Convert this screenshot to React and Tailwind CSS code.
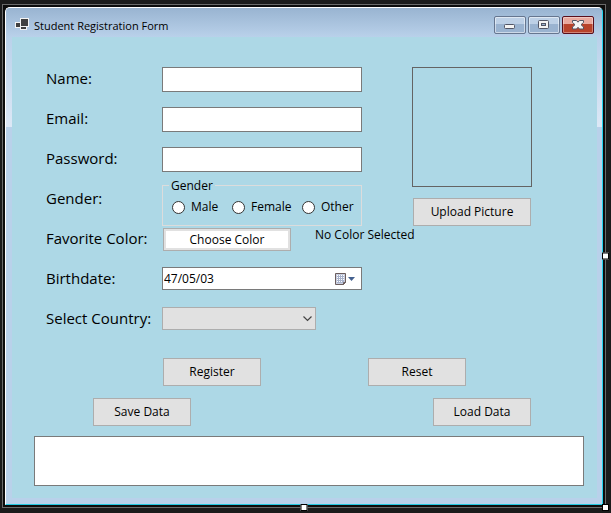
import React from "react";

const buttonClass =
  "h-7 shrink-0 border border-[#adadad] bg-[#e1e1e1] text-center text-[12px] leading-4 text-black";
const inputClass =
  "block h-[25px] w-full border border-[#7a7a7a] bg-white px-1 text-[12px] leading-4 outline-none";
const rowLabelClass = "w-[116px] shrink-0 pt-[7px] text-[15px] leading-6 whitespace-nowrap";

function Row({ label, htmlFor, children }) {
  return (
    <div className="flex h-10">
      {htmlFor ? (
        <label htmlFor={htmlFor} className={rowLabelClass}>
          {label}
        </label>
      ) : (
        <span className={rowLabelClass}>{label}</span>
      )}
      {children}
    </div>
  );
}

function Radio({ label, className }) {
  return (
    <label className={`flex items-center gap-[6px] ${className}`}>
      <input
        type="radio"
        name="gender"
        className="size-[13px] shrink-0 appearance-none rounded-full border border-[#333333] bg-white"
      />
      {label}
    </label>
  );
}

function CaptionButton({ label, close, children }) {
  return (
    <button
      type="button"
      aria-label={label}
      className={
        close
          ? "flex h-[18px] w-8 items-center justify-center rounded-[2px] border border-[#5a0f1c] bg-linear-to-b from-[#e9a99e] from-45% to-[#b8432b] to-45% shadow-[inset_0_0_0_1px_rgba(255,255,255,0.35)]"
          : "flex h-[18px] w-8 items-center justify-center rounded-[2px] border border-[#66768f] bg-linear-to-b from-[#bdd0e6] from-45% to-[#9ab3d0] to-45% shadow-[inset_0_0_0_1px_rgba(255,255,255,0.5)]"
      }
    >
      {children}
    </button>
  );
}

function TitleBar() {
  return (
    <header className="flex h-[29px] items-center bg-linear-to-b from-[#99b4d1] to-[#b9d1ea] pr-2 pl-[9px]">
      <svg width="14" height="17" viewBox="0 0 14 17" shapeRendering="crispEdges" aria-hidden="true">
        <path d="M5 4h9v9h-2v3H5v-2H0V8h5z" fill="#f4f4f4" />
        <path d="M6 5h7v7H6zM1 9h4v4H1zM6 13h5v2H6z" fill="#404040" />
      </svg>
      <h1 className="ml-[5px] flex-1 pt-[6px] text-[11px] leading-4">Student Registration Form</h1>
      <div className="flex gap-[2px] pt-[5px]">
        <CaptionButton label="Minimize">
          <svg width="12" height="10" viewBox="0 0 12 10" aria-hidden="true">
            <rect x="0.5" y="4.5" width="10" height="4" rx="1" fill="#f4f4f4" stroke="#535666" />
          </svg>
        </CaptionButton>
        <CaptionButton label="Maximize">
          <svg width="12" height="10" viewBox="0 0 12 10" aria-hidden="true">
            <rect x="0.5" y="0.5" width="10" height="8" rx="1" fill="#f4f4f4" stroke="#535666" />
            <rect x="3.5" y="3.5" width="4" height="2" fill="#9ab3d0" stroke="#535666" />
          </svg>
        </CaptionButton>
        <CaptionButton label="Close" close>
          <svg width="12" height="10" viewBox="0 0 12 10" aria-hidden="true">
            <path
              d="M0.500 0.500h4l1.500 1.700 1.500-1.700h4v2L9 4.700l2.500 2.300v2h-4L6 7.300 4.500 9h-4V7L3 4.700.5 2.500z"
              fill="#f4f4f4"
              stroke="#535666"
            />
          </svg>
        </CaptionButton>
      </div>
    </header>
  );
}

function Handle({ className }) {
  return <div className={`absolute size-[7px] border border-black bg-white ${className}`} />;
}

export default function App() {
  return (
    <div className="min-h-screen bg-[#1b1b1b] pt-1 pr-[5px] pb-[5px] pl-[2px] font-['Open_Sans','Noto_Sans',sans-serif] text-[12px] leading-4 text-black">
      <div className="relative border border-[#6a6a6a] bg-[#0c0c0c] p-[2px]">
        <main className="overflow-hidden rounded-t-[5px] border border-t-white border-r-[#22d3ee] border-b-[#22c8e0] border-l-white bg-[#b9d1ea]">
          <TitleBar />
          <div className="flex">
            <div className="h-[90px] w-[6px] shrink-0 bg-linear-to-b from-[#b9d1ea] to-[#dde8f6]" />
            <form className="mb-[6px] min-w-0 flex-1 bg-[#add8e6] pt-[22px] pb-3" onSubmit={(e) => e.preventDefault()}>
              <div className="flex pr-[65px] pl-[34px]">
                <div className="min-w-0 flex-1">
                  <Row label="Name:" htmlFor="name">
                    <div className="w-[200px] pt-2">
                      <input id="name" type="text" className={inputClass} />
                    </div>
                  </Row>
                  <Row label="Email:" htmlFor="email">
                    <div className="w-[200px] pt-2">
                      <input id="email" type="email" className={inputClass} />
                    </div>
                  </Row>
                  <Row label="Password:" htmlFor="password">
                    <div className="w-[200px] pt-2">
                      <input id="password" type="password" className={inputClass} />
                    </div>
                  </Row>
                  <Row label="Gender:">
                    <fieldset className="h-[47px] w-[200px] border border-[#dcdcdc] px-[6px]">
                      <legend className="px-[2px] text-[12px] leading-[13px]">Gender</legend>
                      <div className="flex pt-[7px] pl-[3px]">
                        <Radio label="Male" className="w-[60px]" />
                        <Radio label="Female" className="w-[70px]" />
                        <Radio label="Other" className="" />
                      </div>
                    </fieldset>
                  </Row>
                  <Row label="Favorite Color:">
                    <div className="flex items-start pt-2 pl-px">
                      <button
                        type="button"
                        className="mt-px h-[23px] w-32 border border-[#adadad] bg-white text-[12px] leading-4 shadow-[inset_0_0_0_2px_#e1e1e1]"
                      >
                        Choose Color
                      </button>
                      <span className="ml-6 whitespace-nowrap">No Color Selected</span>
                    </div>
                  </Row>
                  <Row label="Birthdate:" htmlFor="birthdate">
                    <div className="w-[200px] pt-2">
                      <div className="flex h-[23px] items-center border border-[#7a7a7a] bg-white pr-1">
                        <input
                          id="birthdate"
                          type="text"
                          defaultValue="47/05/03"
                          className="min-w-0 flex-1 pl-px text-[12px] leading-4 outline-none"
                        />
                        <button type="button" aria-label="Open calendar">
                          <svg width="22" height="14" viewBox="0 0 22 14" aria-hidden="true">
                            <path d="M0.500 1.500h10v9l-2 2h-8z" fill="#c9cfe0" stroke="#6b5d5d" />
                            <path d="M2 3h7v8H2z" fill="#a9b3cc" />
                            <path
                              d="M2 3h1v1h-1zM4 3h1v1h-1zM6 3h1v1h-1zM8 3h1v1h-1zM2 5h1v1h-1zM4 5h1v1h-1zM6 5h1v1h-1zM8 5h1v1h-1zM2 7h1v1h-1zM4 7h1v1h-1zM6 7h1v1h-1zM8 7h1v1h-1zM2 9h1v1h-1zM4 9h1v1h-1zM6 9h1v1h-1z"
                              fill="#ffffff"
                            />
                            <path d="M8.500 12.500v-2h2z" fill="#ffffff" stroke="#6b5d5d" />
                            <path d="M13 5h7l-3.500 4z" fill="#44608f" />
                          </svg>
                        </button>
                      </div>
                    </div>
                  </Row>
                  <Row label="Select Country:" htmlFor="country">
                    <div className="w-[154px] pt-2">
                      <div className="relative">
                        <select
                          id="country"
                          className="block h-[23px] w-full appearance-none border border-[#adadad] bg-[#e1e1e1] px-1 text-[12px]"
                        >
                          <option value=""></option>
                        </select>
                        <svg
                          width="9"
                          height="6"
                          viewBox="0 0 9 6"
                          className="pointer-events-none absolute top-[9px] right-1"
                          aria-hidden="true"
                        >
                          <path d="M.5.5l4 4 4-4" fill="none" stroke="#444444" strokeWidth="1.200" />
                        </svg>
                      </div>
                    </div>
                  </Row>
                </div>
                <div className="flex w-[120px] shrink-0 flex-col pt-2">
                  <div className="h-[120px] border border-[#646464]" />
                  <button type="button" className={`mx-px mt-[11px] ${buttonClass}`}>
                    Upload Picture
                  </button>
                </div>
              </div>
              <div className="mt-[19px] flex justify-between pr-[131px] pl-[151px]">
                <button type="submit" className={`w-[98px] ${buttonClass}`}>Register</button>
                <button type="reset" className={`w-[98px] ${buttonClass}`}>Reset</button>
              </div>
              <div className="mt-3 flex justify-between pr-[66px] pl-[81px]">
                <button type="button" className={`w-[98px] ${buttonClass}`}>Save Data</button>
                <button type="button" className={`w-[98px] ${buttonClass}`}>Load Data</button>
              </div>
              <div className="mt-[10px] pr-[13px] pl-[22px]">
                <textarea
                  aria-label="Student records"
                  readOnly
                  className="block h-[50px] w-full resize-none border border-[#7a7a7a] bg-white p-1 outline-none"
                />
              </div>
            </form>
            <div className="h-[90px] w-[5px] shrink-0 bg-linear-to-b from-[#b9d1ea] to-[#dde8f6]" />
          </div>
        </main>
        <Handle className="top-1/2 -right-1 -translate-y-1/2" />
        <Handle className="-right-1 -bottom-1" />
        <Handle className="-bottom-1 left-1/2 -translate-x-1/2" />
      </div>
    </div>
  );
}
